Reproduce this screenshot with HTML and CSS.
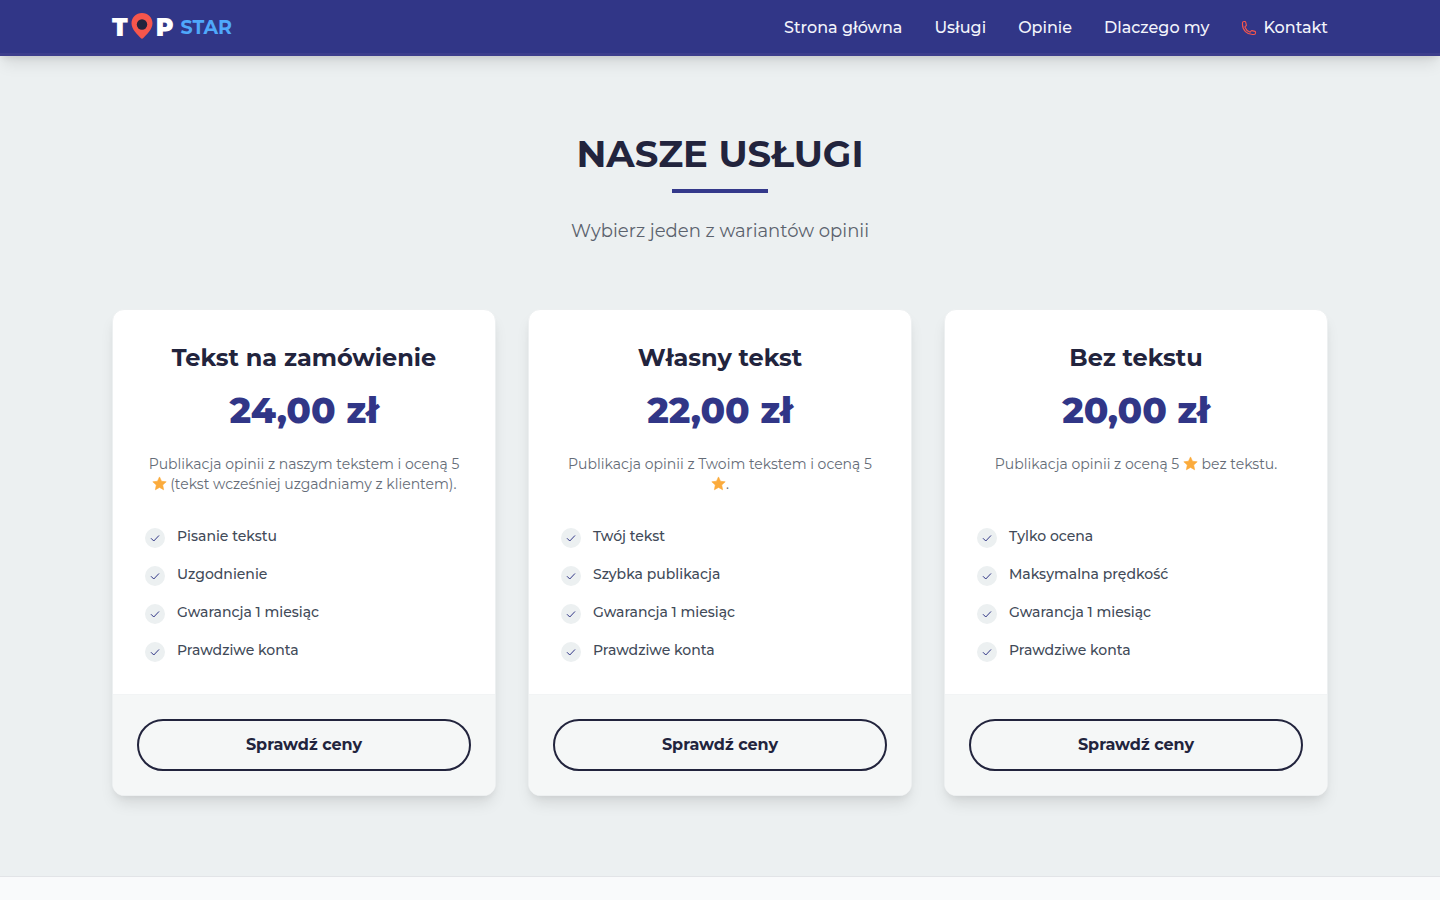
FILE: index.html
```html
<!DOCTYPE html>
<html lang="pl">
<head>
    <meta charset="utf-8">
    <meta name="viewport" content="width=device-width, initial-scale=1.0">
    <title>Top Star</title>
    <link rel="stylesheet" href="styles.css">
</head>
<body>
    <svg class="sprite" width="0" height="0" aria-hidden="true">
        <symbol id="check" viewBox="0 0 24 24">
            <path d="M4.5 13l5 5L19.5 7.500" fill="none" stroke="currentColor" stroke-width="2" stroke-linecap="round" stroke-linejoin="round"/>
        </symbol>
        <symbol id="star" viewBox="0 0 24 24">
            <path d="M12 1.5l3.2 6.9 7.5.9-5.6 5.1 1.5 7.6L12 18.2 5.4 22l1.5-7.6L1.3 9.3l7.5-.9z" fill="#fbab3c" stroke="#fbab3c" stroke-width="1" stroke-linejoin="round"/>
        </symbol>
    </svg>

    <header class="header">
        <div class="container header-row">
            <a class="logo" href="#" aria-label="Top Star">
                <span class="logo-top">T</span>
                <svg class="logo-pin" viewBox="0 0 22 27">
                    <path d="M11 0C5 0 .5 4.500.5 10.300c0 3.200 1.500 6 3.700 8.700 1.800 2.200 4 4.300 5.500 6.100.7.9 1.900.9 2.600 0 1.500-1.800 3.700-3.900 5.500-6.100 2.200-2.700 3.700-5.500 3.700-8.700C21.500 4.500 17 0 11 0z" fill="#f6564c"/>
                    <circle cx="11" cy="11.5" r="5.2" fill="#22243d"/>
                </svg>
                <span class="logo-top">P</span>
                <span class="logo-star">STAR</span>
            </a>
            <nav class="nav">
                <a href="#">Strona główna</a>
                <a href="#uslugi">Usługi</a>
                <a href="#opinie">Opinie</a>
                <a href="#dlaczego">Dlaczego my</a>
                <a href="#kontakt" class="nav-contact">
                    <svg class="phone" viewBox="0 0 24 24">
                        <path d="M2.25 6.75c0 8.284 6.716 15 15 15h2.25a2.25 2.25 0 002.25-2.25v-1.372c0-.516-.351-.966-.852-1.091l-4.423-1.106c-.44-.11-.902.055-1.173.417l-.97 1.293c-.282.376-.769.542-1.21.38a12.035 12.035 0 01-7.143-7.143c-.162-.441.004-.928.38-1.21l1.293-.97c.363-.271.527-.734.417-1.173L6.963 3.102a1.125 1.125 0 00-1.091-.852H4.5A2.25 2.25 0 002.25 4.5v2.25z" fill="none" stroke="currentColor" stroke-width="1.7" stroke-linejoin="round"/>
                    </svg>
                    Kontakt
                </a>
            </nav>
        </div>
    </header>

    <section class="services" id="uslugi">
        <div class="container">
            <h2 class="heading">NASZE USŁUGI</h2>
            <p class="subtitle">Wybierz jeden z wariantów opinii</p>

            <div class="cards">
                <div class="card">
                    <div class="card-body">
                        <h3 class="card-title">Tekst na zamówienie</h3>
                        <p class="price">24,00 zł</p>
                        <p class="desc">Publikacja opinii z naszym tekstem i oceną 5 <svg class="star"><use href="#star"/></svg> (tekst wcześniej uzgadniamy z klientem).</p>
                        <ul class="features">
                            <li><span class="tick"><svg><use href="#check"/></svg></span>Pisanie tekstu</li>
                            <li><span class="tick"><svg><use href="#check"/></svg></span>Uzgodnienie</li>
                            <li><span class="tick"><svg><use href="#check"/></svg></span>Gwarancja 1 miesiąc</li>
                            <li><span class="tick"><svg><use href="#check"/></svg></span>Prawdziwe konta</li>
                        </ul>
                    </div>
                    <div class="card-footer">
                        <button type="button" class="button">Sprawdź ceny</button>
                    </div>
                </div>

                <div class="card">
                    <div class="card-body">
                        <h3 class="card-title">Własny tekst</h3>
                        <p class="price">22,00 zł</p>
                        <p class="desc">Publikacja opinii z Twoim tekstem i oceną 5 <svg class="star"><use href="#star"/></svg>.</p>
                        <ul class="features">
                            <li><span class="tick"><svg><use href="#check"/></svg></span>Twój tekst</li>
                            <li><span class="tick"><svg><use href="#check"/></svg></span>Szybka publikacja</li>
                            <li><span class="tick"><svg><use href="#check"/></svg></span>Gwarancja 1 miesiąc</li>
                            <li><span class="tick"><svg><use href="#check"/></svg></span>Prawdziwe konta</li>
                        </ul>
                    </div>
                    <div class="card-footer">
                        <button type="button" class="button">Sprawdź ceny</button>
                    </div>
                </div>

                <div class="card">
                    <div class="card-body">
                        <h3 class="card-title">Bez tekstu</h3>
                        <p class="price">20,00 zł</p>
                        <p class="desc">Publikacja opinii z oceną 5 <svg class="star"><use href="#star"/></svg> bez tekstu.</p>
                        <ul class="features">
                            <li><span class="tick"><svg><use href="#check"/></svg></span>Tylko ocena</li>
                            <li><span class="tick"><svg><use href="#check"/></svg></span>Maksymalna prędkość</li>
                            <li><span class="tick"><svg><use href="#check"/></svg></span>Gwarancja 1 miesiąc</li>
                            <li><span class="tick"><svg><use href="#check"/></svg></span>Prawdziwe konta</li>
                        </ul>
                    </div>
                    <div class="card-footer">
                        <button type="button" class="button">Sprawdź ceny</button>
                    </div>
                </div>
            </div>
        </div>
    </section>

    <section class="opinions" id="opinie"></section>
</body>
</html>
```

FILE: styles.css
```css
* {
    box-sizing: border-box;
}
body {
    margin: 0;
    background-color: #f9fafb;
    font-family: Montserrat, Inter, sans-serif;
    color: #22243d;
}
h2, h3, p, ul {
    margin: 0;
    padding: 0;
}
a {
    color: inherit;
    text-decoration: none;
}
.sprite {
    position: absolute;
}
.container {
    max-width: 1280px;
    margin: 0 auto;
    padding: 0 32px;
}

/* header */
.header {
    position: sticky;
    top: 0;
    z-index: 10;
    background-color: #313687;
    border-bottom: 3px solid #3d3e8c;
    box-shadow: 0 10px 15px -3px rgba(0, 0, 0, 0.1), 0 4px 6px -2px rgba(0, 0, 0, 0.08);
}
.header-row {
    display: flex;
    align-items: center;
    justify-content: space-between;
    height: 53px;
    padding-top: 2px;
}
.logo {
    display: flex;
    align-items: center;
    gap: 3px;
}
.logo-top {
    font-size: 24px;
    line-height: 24px;
    font-weight: 900;
    color: #fff;
}
.logo-pin {
    width: 22px;
    height: 27px;
    margin-bottom: 2px;
}
.logo-star {
    margin-left: 4px;
    font-size: 19px;
    line-height: 24px;
    font-weight: 700;
    color: #4fa8fb;
}
.nav {
    display: flex;
    gap: 32px;
    font-size: 16px;
    line-height: 24px;
    font-weight: 500;
    color: #f3f4fb;
}
.nav-contact {
    display: flex;
    align-items: center;
    gap: 6px;
}
.phone {
    width: 16px;
    height: 16px;
    color: #f6564c;
}

/* services */
.services {
    padding: 80px 0;
    background-color: #ecf0f1;
    border-bottom: 1px solid #e2e4e7;
}
.heading {
    font-size: 37px;
    line-height: 36px;
    font-weight: 700;
    text-align: center;
}
.heading::after {
    content: "";
    display: block;
    width: 96px;
    height: 4px;
    margin: 17px auto 0;
    background-color: #34398b;
}
.subtitle {
    margin-top: 24px;
    font-size: 18px;
    line-height: 28px;
    font-weight: 400;
    text-align: center;
    color: #5b626d;
}
.cards {
    display: grid;
    grid-template-columns: repeat(3, 1fr);
    gap: 32px;
    margin-top: 64px;
}
.card {
    display: flex;
    flex-direction: column;
    overflow: hidden;
    background-color: #fff;
    border: 1px solid #edf0f1;
    border-radius: 12px;
    box-shadow: 0 10px 15px -3px rgba(0, 0, 0, 0.1), 0 4px 6px -2px rgba(0, 0, 0, 0.05);
}
.card-body {
    flex: 1;
    padding: 32px;
}
.card-title {
    font-size: 24px;
    line-height: 32px;
    font-weight: 700;
    text-align: center;
}
.price {
    margin-top: 16px;
    font-size: 36px;
    line-height: 40px;
    font-weight: 800;
    text-align: center;
    color: #313687;
}
.desc {
    min-height: 40px;
    margin-top: 24px;
    font-size: 14px;
    line-height: 20px;
    font-weight: 400;
    text-align: center;
    color: #656c77;
}
.star {
    width: 15px;
    height: 15px;
    vertical-align: -2px;
}
.features {
    display: flex;
    flex-direction: column;
    gap: 16px;
    margin-top: 32px;
    list-style: none;
    font-size: 14px;
    line-height: 20px;
    font-weight: 500;
    color: #414a58;
}
.features li {
    display: flex;
    gap: 12px;
}
.tick {
    display: flex;
    align-items: center;
    justify-content: center;
    width: 20px;
    height: 20px;
    margin-top: 2px;
    border-radius: 50%;
    background-color: #ecf0f1;
    color: #313687;
}
.tick svg {
    width: 12px;
    height: 12px;
}
.card-footer {
    padding: 24px;
    background-color: #f5f7f7;
    border-top: 1px solid #f2f4f5;
}
.button {
    display: block;
    width: 100%;
    height: 52px;
    padding: 0 0 2px;
    background: none;
    border: 2px solid #22243d;
    border-radius: 26px;
    font-family: inherit;
    font-size: 16px;
    font-weight: 700;
    color: #22243d;
    cursor: pointer;
}

.opinions {
    min-height: 23px;
}

@media (max-width: 900px) {
    .cards {
        grid-template-columns: 1fr;
    }
    .nav {
        display: none;
    }
}
```
